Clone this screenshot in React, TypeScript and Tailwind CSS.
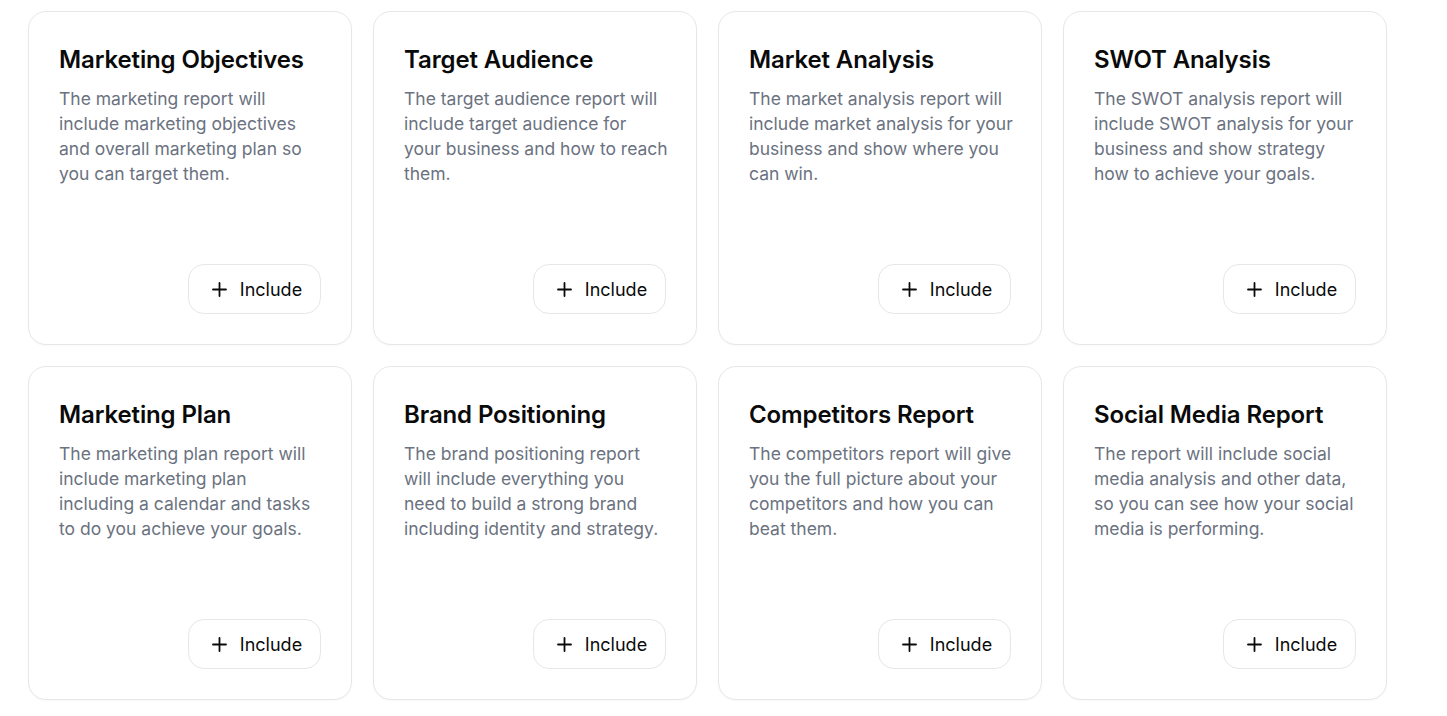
const reports = [
  {
    title: 'Marketing Objectives',
    lines: ['The marketing report will', 'include marketing objectives', 'and overall marketing plan so', 'you can target them.'],
  },
  {
    title: 'Target Audience',
    lines: ['The target audience report will', 'include target audience for', 'your business and how to reach', 'them.'],
  },
  {
    title: 'Market Analysis',
    lines: ['The market analysis report will', 'include market analysis for your', 'business and show where you', 'can win.'],
  },
  {
    title: 'SWOT Analysis',
    lines: ['The SWOT analysis report will', 'include SWOT analysis for your', 'business and show strategy', 'how to achieve your goals.'],
  },
  {
    title: 'Marketing Plan',
    lines: ['The marketing plan report will', 'include marketing plan', 'including a calendar and tasks', 'to do you achieve your goals.'],
  },
  {
    title: 'Brand Positioning',
    lines: ['The brand positioning report', 'will include everything you', 'need to build a strong brand', 'including identity and strategy.'],
  },
  {
    title: 'Competitors Report',
    lines: ['The competitors report will give', 'you the full picture about your', 'competitors and how you can', 'beat them.'],
  },
  {
    title: 'Social Media Report',
    lines: ['The report will include social', 'media analysis and other data,', 'so you can see how your social', 'media is performing.'],
  },
];

const PlusIcon = () => (
  <svg width="15" height="15" viewBox="0 0 15 15" fill="none" stroke="currentColor" strokeWidth="1.8" strokeLinecap="round">
    <path d="M7.5 1v13M1 7.5h13" />
  </svg>
);

const ReportCard = ({ title, lines }: { title: string; lines: string[] }) => (
  <div className="flex h-[334px] flex-col rounded-[18px] border border-gray-200 bg-white px-[30px] pb-[30px] pt-[32px] shadow-[0_1px_2px_rgba(0,0,0,0.03)]">
    <h3 className="text-[24px] font-semibold leading-8 tracking-[-0.005em] text-[#0a0a0a]">{title}</h3>
    <p className="mr-[-16px] mt-[10px] text-[17.5px] leading-[25px] text-[#6b7280]">
      {lines.map((line, i) => (
        <span key={i} className="block whitespace-nowrap">
          {line}
        </span>
      ))}
    </p>
    <div className="mt-auto flex justify-end">
      <button className="flex h-[50px] w-[133px] items-center justify-center gap-[13px] rounded-[16px] border border-gray-200 bg-white pl-[5px] text-[18px] text-[#0a0a0a]">
        <PlusIcon />
        <span>Include</span>
      </button>
    </div>
  </div>
);

export default function App() {
  return (
    <div className="min-h-screen bg-white font-['Inter',sans-serif]">
      <div className="grid w-[1387px] grid-cols-4 gap-[21px] pl-[28px] pt-[11px]">
        {reports.map((r) => (
          <ReportCard key={r.title} title={r.title} lines={r.lines} />
        ))}
      </div>
    </div>
  );
}
